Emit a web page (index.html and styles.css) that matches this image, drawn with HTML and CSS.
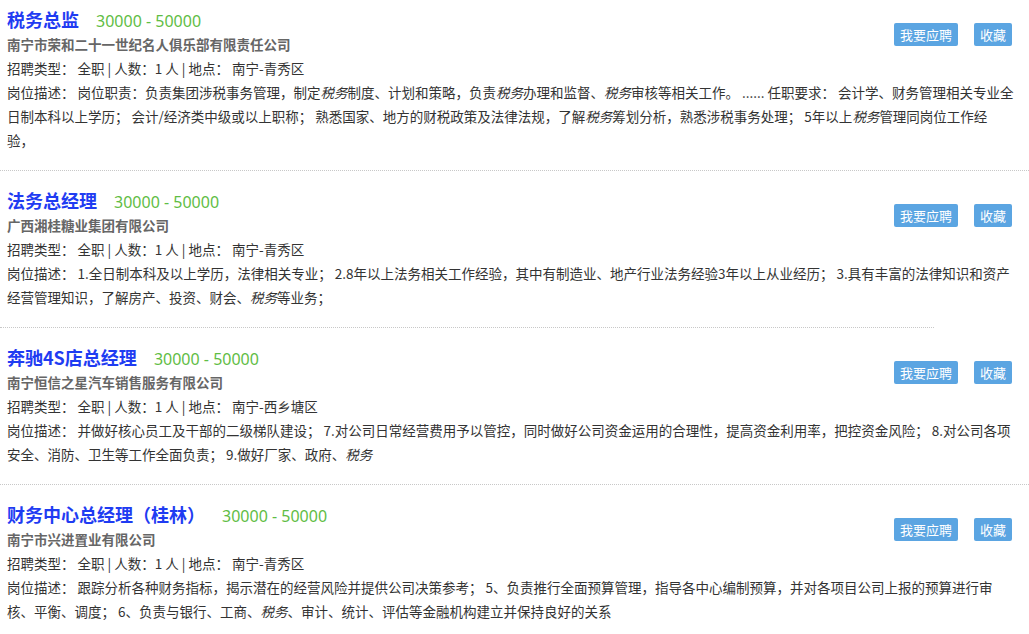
FILE: index.html
```html
<!DOCTYPE html>
<html lang="zh-CN">
<head>
    <meta charset="UTF-8">
    <meta name="viewport" content="width=device-width, initial-scale=1.0">
    <title>职位列表</title>
    <link rel="stylesheet" href="styles.css">
</head>
<body>
    <div class="job-list">
        <div class="job">
            <div class="job-info">
                <div class="job-title">
                    <a href="#" class="job-name">税务总监</a>
                    <span class="salary">30000 - 50000</span>
                </div>
                <div class="company">南宁市荣和二十一世纪名人俱乐部有限责任公司</div>
                <div class="meta">招聘类型： 全职 | 人数：1 人 | 地点： 南宁-青秀区</div>
                <div class="desc">岗位描述： 岗位职责：负责集团涉税事务管理，制定<em>税务</em>制度、计划和策略，负责<em>税务</em>办理和监督、<em>税务</em>审核等相关工作。 ...... 任职要求： 会计学、财务管理相关专业全日制本科以上学历； 会计/经济类中级或以上职称； 熟悉国家、地方的财税政策及法律法规，了解<em>税务</em>筹划分析，熟悉涉税事务处理； 5年以上<em>税务</em>管理同岗位工作经验，</div>
            </div>
            <div class="actions">
                <button class="btn">我要应聘</button>
                <button class="btn">收藏</button>
            </div>
        </div>
        <div class="sep"></div>

        <div class="job">
            <div class="job-info">
                <div class="job-title">
                    <a href="#" class="job-name">法务总经理</a>
                    <span class="salary">30000 - 50000</span>
                </div>
                <div class="company">广西湘桂糖业集团有限公司</div>
                <div class="meta">招聘类型： 全职 | 人数：1 人 | 地点： 南宁-青秀区</div>
                <div class="desc">岗位描述： 1.全日制本科及以上学历，法律相关专业； 2.8年以上法务相关工作经验，其中有制造业、地产行业法务经验3年以上从业经历； 3.具有丰富的法律知识和资产经营管理知识，了解房产、投资、财会、<em>税务</em>等业务；</div>
            </div>
            <div class="actions">
                <button class="btn">我要应聘</button>
                <button class="btn">收藏</button>
            </div>
        </div>
        <div class="sep short"></div>

        <div class="job">
            <div class="job-info">
                <div class="job-title">
                    <a href="#" class="job-name">奔驰4S店总经理</a>
                    <span class="salary">30000 - 50000</span>
                </div>
                <div class="company">南宁恒信之星汽车销售服务有限公司</div>
                <div class="meta">招聘类型： 全职 | 人数：1 人 | 地点： 南宁-西乡塘区</div>
                <div class="desc">岗位描述： 并做好核心员工及干部的二级梯队建设； 7.对公司日常经营费用予以管控，同时做好公司资金运用的合理性，提高资金利用率，把控资金风险； 8.对公司各项安全、消防、卫生等工作全面负责； 9.做好厂家、政府、<em>税务</em></div>
            </div>
            <div class="actions">
                <button class="btn">我要应聘</button>
                <button class="btn">收藏</button>
            </div>
        </div>
        <div class="sep"></div>

        <div class="job">
            <div class="job-info">
                <div class="job-title">
                    <a href="#" class="job-name">财务中心总经理（桂林）</a>
                    <span class="salary">30000 - 50000</span>
                </div>
                <div class="company">南宁市兴进置业有限公司</div>
                <div class="meta">招聘类型： 全职 | 人数：1 人 | 地点： 南宁-青秀区</div>
                <div class="desc">岗位描述： 跟踪分析各种财务指标，揭示潜在的经营风险并提供公司决策参考； 5、负责推行全面预算管理，指导各中心编制预算，并对各项目公司上报的预算进行审核、平衡、调度； 6、负责与银行、工商、<em>税务</em>、审计、统计、评估等金融机构建立并保持良好的关系</div>
            </div>
            <div class="actions">
                <button class="btn">我要应聘</button>
                <button class="btn">收藏</button>
            </div>
        </div>
    </div>
</body>
</html>
```

FILE: styles.css
```css
body {
    margin: 0;
    background: #fff;
    color: #333;
    font-family: "Noto Sans CJK SC", sans-serif;
    font-size: 13.5px;
}

.job-list {
    overflow: hidden;
}

.job {
    position: relative;
    padding: 16px 15px 18px 7px;
    line-height: 24px;
}

.job:first-child {
    padding-top: 6px;
}

.job-title {
    font-size: 18px;
    line-height: 26px;
}

.job-name {
    color: #1f3cf2;
    font-weight: bold;
    text-decoration: none;
}

.salary {
    margin-left: 13px;
    color: #5fbd45;
    font-family: "Noto Sans", sans-serif;
    font-size: 16px;
    line-height: 1;
}

.company {
    color: #666;
    font-weight: bold;
}

.desc em {
    font-style: italic;
}

.actions {
    position: absolute;
    top: 33px;
    right: 17px;
    display: flex;
    gap: 16px;
}

.job:first-child .actions {
    top: 23px;
}

.btn {
    height: 23px;
    padding: 0 6px;
    border: none;
    border-radius: 2px;
    background: #5ba5e2;
    color: #fff;
    font-family: inherit;
    font-size: 13px;
    line-height: 23px;
    cursor: pointer;
}

.sep {
    border-top: 1px dotted #c8c8c8;
}

.sep.short {
    width: 934px;
}
```
